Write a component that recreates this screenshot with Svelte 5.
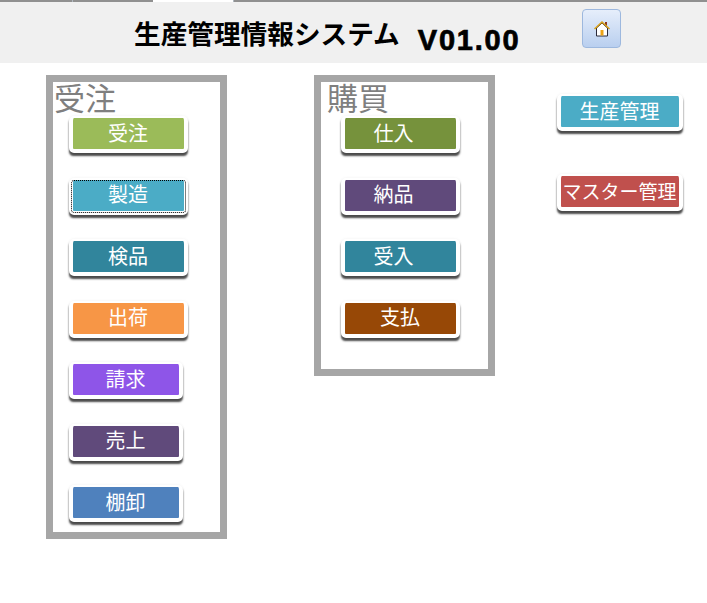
<script>
  const LEFT_BUTTONS = [
    { label: '受注', color: '#9bbb59', wide: true },
    { label: '製造', color: '#4bacc6', wide: true, focused: true },
    { label: '検品', color: '#31859c', wide: true },
    { label: '出荷', color: '#f79646', wide: true },
    { label: '請求', color: '#8e55e8' },
    { label: '売上', color: '#604a7b' },
    { label: '棚卸', color: '#4f81bd' }
  ];
  const RIGHT_BUTTONS = [
    { label: '仕入', color: '#76923c', shifted: true },
    { label: '納品', color: '#604a7b', shifted: true },
    { label: '受入', color: '#31859c', shifted: true },
    { label: '支払', color: '#974806' }
  ];
  const SIDE_BUTTONS = [
    { label: '生産管理', color: '#4bacc6' },
    { label: 'マスター管理', color: '#c0504d', small: true }
  ];
</script>

{#snippet menuButton(item)}
  <button class="menu-btn" class:focused={item.focused} class:small={item.small} class:shifted={item.shifted} style="background-color:{item.color}">{item.label}</button>
{/snippet}

<div class="page">
  <div class="tabs">
    <span class="tab"></span>
    <span class="tab active"></span>
    <span class="tab"></span>
  </div>
  <header class="header">
    <h1 class="title">生産管理情報システム</h1>
    <span class="version">V01.00</span>
    <button class="home" aria-label="home">
      <svg width="18" height="18" viewBox="0 0 18 18">
        <rect x="12" y="2" width="2" height="5" fill="#8c3a22" />
        <path d="M3.5 8 V16 H14.5 V8 L9 3 Z" fill="#fff" stroke="#2a2a3a" stroke-width="1" />
        <path d="M1.5 9 L9 2 L16.5 9" fill="none" stroke="#d9a21b" stroke-width="1.6" />
        <rect x="7.5" y="10" width="3" height="5.5" fill="#eda315" />
      </svg>
    </button>
  </header>

  <main class="content">
    <section class="panel panel-left">
      <h2 class="panel-title">受注</h2>
      <div class="stack">
        {#each LEFT_BUTTONS as item}
          <div class:wide={item.wide}>{@render menuButton(item)}</div>
        {/each}
      </div>
    </section>

    <section class="panel panel-right">
      <h2 class="panel-title">購買</h2>
      <div class="stack">
        {#each RIGHT_BUTTONS as item}
          <div class="wide">{@render menuButton(item)}</div>
        {/each}
      </div>
    </section>

    <aside class="side">
      {#each SIDE_BUTTONS as item}
        {@render menuButton(item)}
      {/each}
    </aside>
  </main>
</div>

<style>
  :global(body) {
    background: #fff;
  }

  .page {
    width: 707px;
    height: 603px;
    overflow: hidden;
    font-family: 'Noto Sans CJK JP', 'Liberation Sans', sans-serif;
  }

  .tabs {
    display: flex;
    height: 2px;
    padding-left: 72px;
    background: #909090;
  }

  .tab {
    width: 80px;
    border-left: 1px solid #b0b8c0;
  }

  .tab.active {
    background: #fff;
    border-left: 0;
  }

  .header {
    display: flex;
    align-items: flex-start;
    height: 61px;
    background: #f0f0f0;
  }

  .title {
    margin: 14px 0 0 134px;
    font-size: 26.67px;
    line-height: 34px;
    font-weight: 700;
    color: #000;
    white-space: nowrap;
  }

  .version {
    margin: 21px 0 0 18px;
    font-family: 'Liberation Sans', sans-serif;
    font-size: 29px;
    line-height: 34px;
    font-weight: 700;
    letter-spacing: 1.8px;
    -webkit-text-stroke: 0.7px #000;
    color: #000;
  }

  .home {
    display: flex;
    align-items: center;
    justify-content: center;
    width: 39px;
    height: 39px;
    margin: 7px 0 0 62px;
    padding: 0;
    border: 1px solid #9db8de;
    border-radius: 4px;
    background: linear-gradient(#e6eefb, #b9cfef);
  }

  .content {
    display: flex;
    align-items: flex-start;
    padding: 12px 0 0 46px;
  }

  .panel {
    box-sizing: border-box;
    width: 181px;
    border: 7px solid #a6a6a6;
    background: #fff;
  }

  .panel-left {
    height: 464px;
  }

  .panel-right {
    height: 301px;
    margin-left: 87px;
  }

  .panel-title {
    height: 34px;
    margin: -3px 0 3px 1px;
    font-size: 31px;
    line-height: 36px;
    font-weight: 400;
    color: #7f7f7f;
  }

  .panel-right .panel-title {
    margin-left: 6px;
  }

  .stack {
    display: flex;
    flex-direction: column;
    gap: 24.5px;
    padding-left: 16px;
  }

  .panel-right .stack {
    padding-left: 20px;
  }

  .stack > div {
    width: 114px;
  }

  .stack > .wide {
    width: 119px;
  }

  .stack button {
    width: 100%;
  }

  .menu-btn {
    box-sizing: border-box;
    display: block;
    height: 37px;
    padding: 0 1px 2px 0;
    border: 4px solid #fff;
    border-top-width: 2px;
    border-bottom-width: 4px;
    border-radius: 5px;
    box-shadow: 0 3px 2px -0.5px #4a4a4a, 0 0 3px rgba(0, 0, 0, 0.06);
    color: #fff;
    font-family: inherit;
    font-size: 20px;
    line-height: 28px;
    white-space: nowrap;
  }

  .menu-btn.small {
    font-size: 19px;
  }

  .menu-btn.shifted {
    padding-right: 14px;
  }

  .menu-btn.focused {
    outline: 1px dotted #000;
    outline-offset: -3px;
  }

  .side {
    display: flex;
    flex-direction: column;
    gap: 43px;
    margin: 19px 0 0 62px;
  }

  .side .menu-btn {
    width: 126px;
  }
</style>
